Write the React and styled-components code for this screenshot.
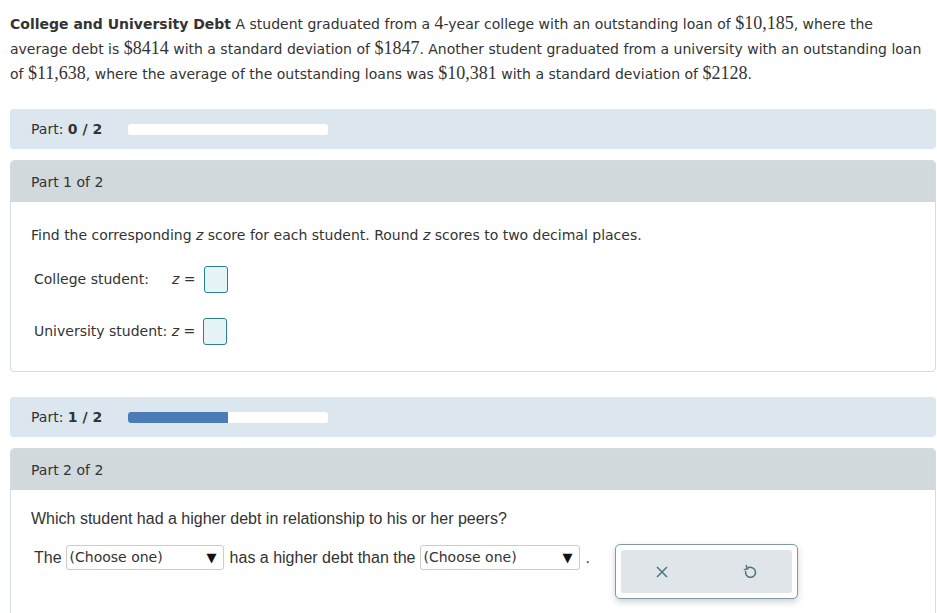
import React from "react";
import styled, { createGlobalStyle } from "styled-components";

const GlobalStyle = createGlobalStyle`
  html, body {
    margin: 0;
    padding: 0;
    background: #fff;
  }
  body {
    font-family: "DejaVu Sans", Verdana, sans-serif;
    font-size: 14px;
    color: #333;
  }
`;

const Page = styled.div`
  padding: 11px 1px 0 10px;
  height: 613px;
  overflow: hidden;
  box-sizing: border-box;
`;

const Intro = styled.p`
  margin: 0 0 23px;
  width: 920px;
  line-height: 24px;
  font-size: 14px;
  color: #333;
`;

const Num = styled.span`
  font-family: "Liberation Serif", "Times New Roman", serif;
  font-size: 18px;
`;

const PartBar = styled.div`
  display: flex;
  align-items: center;
  height: 40px;
  background: #dbe6ef;
  border-radius: 4px;
  padding-left: 21px;
  margin-bottom: 11px;
  color: #333;
`;

const PartLabel = styled.span`
  width: 97px;
  b {
    font-weight: bold;
  }
`;

const Track = styled.div`
  width: 200px;
  height: 11px;
  background: #fff;
  border-radius: 3px;
  overflow: hidden;
`;

const Fill = styled.div`
  height: 100%;
  background: #4a7db7;
`;

const Card = styled.div`
  border: 1px solid #d3dcdf;
  border-radius: 4px;
  overflow: hidden;
  margin-bottom: 25px;
`;

const CardHeader = styled.div`
  height: 41px;
  display: flex;
  align-items: center;
  padding-left: 20px;
  background: #d1d9dd;
  color: #333;
`;

const CardBody = styled.div`
  padding: ${(p) => p.$pad || "24px 20px 26px"};
  height: ${(p) => p.$h || "auto"};
  box-sizing: border-box;
`;

const Prompt = styled.div`
  line-height: 18px;
  margin-bottom: ${(p) => p.$mb || "22px"};
  font-family: ${(p) => (p.$arial ? '"Liberation Sans", Arial, sans-serif' : "inherit")};
  font-size: ${(p) => (p.$arial ? "16px" : "14px")};
`;

const Zvar = styled.i`
  font-family: "DejaVu Sans", Verdana, sans-serif;
`;

const AnswerRow = styled.div`
  display: flex;
  align-items: center;
  padding-left: 3px;
  height: 28px;
  margin-bottom: ${(p) => p.$mb || "0"};
`;

const RowLabel = styled.span`
  width: ${(p) => p.$w || "auto"};
`;

const Eq = styled.span`
  margin-right: 8px;
  i {
    font-style: italic;
  }
`;

const AnswerBox = styled.span`
  display: inline-block;
  width: 22px;
  height: 25px;
  border: 1px solid #2a8191;
  border-radius: 3px;
  background: #e6f3f7;
`;

const SentenceRow = styled.div`
  display: flex;
  align-items: flex-start;
  padding-left: 3px;
  line-height: 25px;
  font-family: "Liberation Sans", Arial, sans-serif;
  font-size: 16px;
  color: #333;
`;

const Select = styled.div`
  display: flex;
  align-items: center;
  justify-content: space-between;
  width: ${(p) => p.$w}px;
  height: 25px;
  box-sizing: border-box;
  border: 1px solid #ccc;
  border-radius: 3px;
  margin: 0 6px 0 4px;
  padding: 0 6px 0 3px;
  font-family: "DejaVu Sans", Verdana, sans-serif;
  font-size: 14px;
  color: #333;
  background: #fff;
`;

const Arrow = styled.span`
  font-size: 13px;
  color: #111;
`;

const ToolPanel = styled.div`
  margin-left: 25px;
  margin-top: -1px;
  width: 183px;
  height: 55px;
  box-sizing: border-box;
  border: 1px solid #7f9aa2;
  border-radius: 5px;
  padding: 5px;
  box-shadow: 0 3px 6px rgba(60, 80, 90, 0.25);
  background: #fff;
`;

const ToolInner = styled.div`
  height: 100%;
  display: flex;
  align-items: center;
  justify-content: center;
  gap: 48px;
  background: #dfe5e8;
  border-radius: 3px;
`;

const IconBtn = styled.span`
  display: flex;
  align-items: center;
  justify-content: center;
  width: 40px;
  height: 30px;
  color: #4a7482;
`;

const XIcon = () => (
  <svg width="14" height="14" viewBox="0 0 14 14">
    <path d="M2 2 L12 12 M12 2 L2 12" stroke="currentColor" strokeWidth="1.5" fill="none" />
  </svg>
);

const UndoIcon = () => (
  <svg width="14" height="16" viewBox="0 0 14 16">
    <path
      d="M4.2 4.6 A5 5 0 1 1 2.6 7.4"
      stroke="currentColor"
      strokeWidth="1.5"
      fill="none"
      strokeLinecap="round"
    />
    <path d="M3.2 1.6 L4.4 4.8 L1.4 5.6" stroke="currentColor" strokeWidth="1.5" fill="none" strokeLinecap="round" strokeLinejoin="round" />
  </svg>
);

const Progress = ({ done, total }) => (
  <PartBar>
    <PartLabel>
      Part: <b>{done} / {total}</b>
    </PartLabel>
    <Track>
      <Fill style={{ width: `${(done / total) * 100}%` }} />
    </Track>
  </PartBar>
);

export default function App() {
  return (
    <>
      <GlobalStyle />
      <Page>
        <Intro>
          <b>College and University Debt</b> A student graduated from a <Num>4</Num>-year college with an
          outstanding loan of <Num>$10,185</Num>, where the average debt is <Num>$8414</Num> with a standard
          deviation of <Num>$1847</Num>. Another student graduated from a university with an outstanding loan
          of <Num>$11,638</Num>, where the average of the outstanding loans was <Num>$10,381</Num> with a
          standard deviation of <Num>$2128</Num>.
        </Intro>

        <Progress done={0} total={2} />

        <Card>
          <CardHeader>Part 1 of 2</CardHeader>
          <CardBody $pad="24px 20px 26px">
            <Prompt $mb="21px">
              Find the corresponding <Zvar>z</Zvar> score for each student. Round <Zvar>z</Zvar> scores to two
              decimal places.
            </Prompt>
            <AnswerRow $mb="24px">
              <RowLabel $w="138px">College student:</RowLabel>
              <Eq>
                <i>z</i> =
              </Eq>
              <AnswerBox />
            </AnswerRow>
            <AnswerRow>
              <RowLabel>University student:&nbsp;</RowLabel>
              <Eq>
                <i>z</i> =
              </Eq>
              <AnswerBox />
            </AnswerRow>
          </CardBody>
        </Card>

        <Progress done={1} total={2} />

        <Card>
          <CardHeader>Part 2 of 2</CardHeader>
          <CardBody $pad="20px 20px 0" $h="200px">
            <Prompt $arial $mb="17px">
              Which student had a higher debt in relationship to his or her peers?
            </Prompt>
            <SentenceRow>
              The
              <Select $w={158}>
                (Choose one)<Arrow>▼</Arrow>
              </Select>
              has a higher debt than the
              <Select $w={160}>
                (Choose one)<Arrow>▼</Arrow>
              </Select>
              .
              <ToolPanel>
                <ToolInner>
                  <IconBtn>
                    <XIcon />
                  </IconBtn>
                  <IconBtn>
                    <UndoIcon />
                  </IconBtn>
                </ToolInner>
              </ToolPanel>
            </SentenceRow>
          </CardBody>
        </Card>
      </Page>
    </>
  );
}
